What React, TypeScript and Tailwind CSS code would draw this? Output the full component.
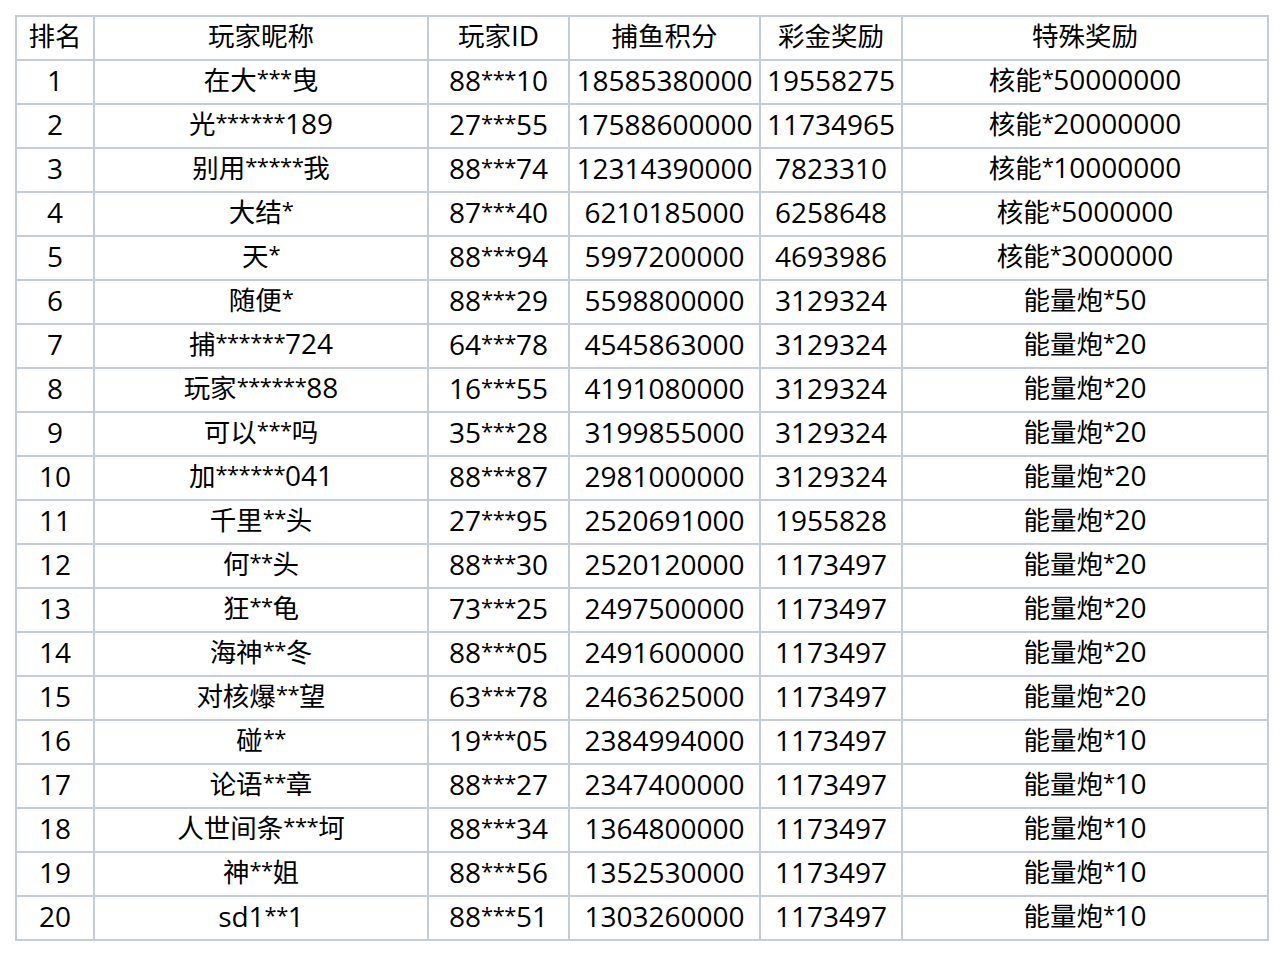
import React from "react";

const header = ["排名", "玩家昵称", "玩家ID", "捕鱼积分", "彩金奖励", "特殊奖励"];

const rows: string[][] = [
  ["1", "在大***曳", "88***10", "18585380000", "19558275", "核能*50000000"],
  ["2", "光******189", "27***55", "17588600000", "11734965", "核能*20000000"],
  ["3", "别用*****我", "88***74", "12314390000", "7823310", "核能*10000000"],
  ["4", "大结*", "87***40", "6210185000", "6258648", "核能*5000000"],
  ["5", "天*", "88***94", "5997200000", "4693986", "核能*3000000"],
  ["6", "随便*", "88***29", "5598800000", "3129324", "能量炮*50"],
  ["7", "捕******724", "64***78", "4545863000", "3129324", "能量炮*20"],
  ["8", "玩家******88", "16***55", "4191080000", "3129324", "能量炮*20"],
  ["9", "可以***吗", "35***28", "3199855000", "3129324", "能量炮*20"],
  ["10", "加******041", "88***87", "2981000000", "3129324", "能量炮*20"],
  ["11", "千里**头", "27***95", "2520691000", "1955828", "能量炮*20"],
  ["12", "何**头", "88***30", "2520120000", "1173497", "能量炮*20"],
  ["13", "狂**龟", "73***25", "2497500000", "1173497", "能量炮*20"],
  ["14", "海神**冬", "88***05", "2491600000", "1173497", "能量炮*20"],
  ["15", "对核爆**望", "63***78", "2463625000", "1173497", "能量炮*20"],
  ["16", "碰**", "19***05", "2384994000", "1173497", "能量炮*10"],
  ["17", "论语**章", "88***27", "2347400000", "1173497", "能量炮*10"],
  ["18", "人世间条***坷", "88***34", "1364800000", "1173497", "能量炮*10"],
  ["19", "神**姐", "88***56", "1352530000", "1173497", "能量炮*10"],
  ["20", "sd1**1", "88***51", "1303260000", "1173497", "能量炮*10"],
];

function Runs({ text }: { text: string }) {
  const parts = text.match(/(\*+)|([\u4e00-\u9fff]+)|([^*\u4e00-\u9fff]+)/g) || [];
  return (
    <>
      {parts.map((p, i) => {
        if (p[0] === "*") {
          return (
            <span key={i} className="align-[4px] text-[22px] tracking-[-0.5px]">
              {p}
            </span>
          );
        }
        if (/[\u4e00-\u9fff]/.test(p[0])) {
          return (
            <span key={i} className="text-[26.5px]">
              {p}
            </span>
          );
        }
        return <span key={i}>{p}</span>;
      })}
    </>
  );
}

function Cell({ text }: { text: string }) {
  return (
    <div className="flex h-[44px] items-center justify-center border-r-2 border-b-2 border-[#c6cbdc] pb-[5px] leading-none whitespace-nowrap">
      <span>
        <Runs text={text} />
      </span>
    </div>
  );
}

export default function App() {
  return (
    <div
      className="min-h-[956px] w-[1284px] bg-white pt-[15px] pl-[15px] text-[28px] text-black"
      style={{ fontFamily: '"Open Sans", "Noto Sans CJK SC", sans-serif' }}
    >
      <div className="grid w-[1254px] grid-cols-[78px_334px_141px_191px_142px_366px] border-t-2 border-l-2 border-[#c6cbdc]">
        {header.map((h, i) => (
          <Cell key={"h" + i} text={h} />
        ))}
        {rows.map((r, ri) =>
          r.map((c, ci) => <Cell key={ri + "-" + ci} text={c} />)
        )}
      </div>
    </div>
  );
}
